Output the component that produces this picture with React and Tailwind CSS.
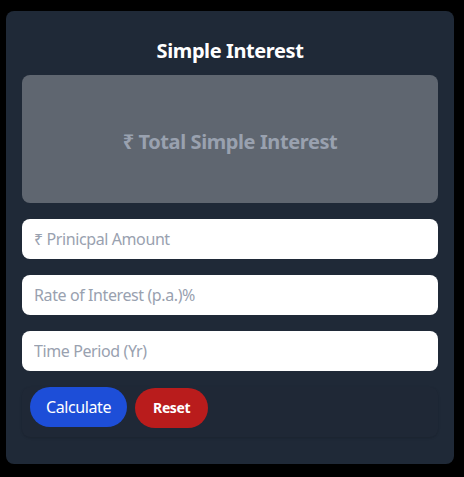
import React, { useState } from "react";

function App() {
  const [principal, setPrincipal] = useState("");
  const [rate, setRate] = useState("");
  const [time, setTime] = useState("");
  const [interest, setInterest] = useState(null);

  const calculate = () => {
    const p = parseFloat(principal);
    const r = parseFloat(rate);
    const t = parseFloat(time);
    if (isNaN(p) || isNaN(r) || isNaN(t)) return;
    setInterest(((p * r * t) / 100).toFixed(2));
  };

  const reset = () => {
    setPrincipal("");
    setRate("");
    setTime("");
    setInterest(null);
  };

  const inputClass =
    "w-full h-10 rounded-lg bg-white px-3 text-base text-gray-800 placeholder:text-gray-400 outline-none";

  return (
    <div
      className="min-h-screen bg-black pt-[11px] px-[6px] tracking-tight"
      style={{ fontFamily: '"Noto Sans", "DejaVu Sans", sans-serif' }}
    >
      <div className="w-[448px] rounded-lg bg-[#1f2937] px-4 pt-4 pb-[27px]">
        <h1 className="mt-[10px] mb-[10px] text-center text-xl leading-7 font-bold text-white">Simple Interest</h1>

        {/* result box */}
        <div className="h-32 rounded-lg bg-[#5f6670] flex items-center justify-center pt-[5px]">
          <span className="text-xl font-bold text-gray-400">
            {interest === null ? "₹ Total Simple Interest" : `₹ ${interest}`}
          </span>
        </div>

        <div className="mt-4 flex flex-col gap-4">
          <input className={inputClass} placeholder="₹ Prinicpal Amount" value={principal} onChange={(e) => setPrincipal(e.target.value)} />
          <input className={inputClass} placeholder="Rate of Interest (p.a.)%" value={rate} onChange={(e) => setRate(e.target.value)} />
          <input className={inputClass} placeholder="Time Period (Yr)" value={time} onChange={(e) => setTime(e.target.value)} />
        </div>

        {/* buttons */}
        <div className="mt-4 flex items-start gap-2 rounded-lg bg-[#1f2836] px-2 pb-[9px] shadow-sm">
          <button onClick={calculate} className="h-10 rounded-full bg-[#1d4ed8] px-4 text-base text-white">
            Calculate
          </button>
          <button onClick={reset} className="mt-px h-10 rounded-full bg-[#b91c1c] px-[18px] text-sm font-bold text-white">
            Reset
          </button>
        </div>
      </div>
    </div>
  );
}

export default App;
